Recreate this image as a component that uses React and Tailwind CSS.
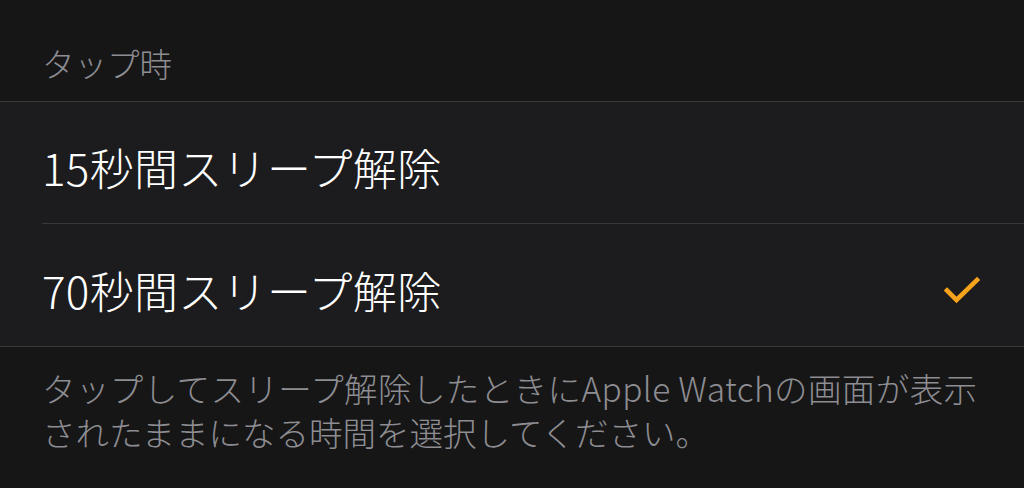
const FONT = "font-['Noto_Sans_CJK_JP','Noto_Sans',sans-serif]";

const options = [
  { id: '15', label: '15秒間スリープ解除', selected: false },
  { id: '70', label: '70秒間スリープ解除', selected: true },
];

const CheckMark = () => (
  <svg width="36" height="30" viewBox="0 0 36 30" fill="none">
    <path
      d="M3 15.5 L12.5 25 L33 5"
      stroke="#f7a21b"
      strokeWidth="4.6"
      strokeLinecap="square"
      strokeLinejoin="miter"
    />
  </svg>
);

const App = () => {
  return (
    <div className={`w-[1024px] h-[488px] overflow-hidden bg-[#161617] font-light ${FONT}`}>
      <div className="px-[42px] pt-[45px] pb-[20px] text-[32.5px] leading-[36px] text-[#8d8d92]">
        タップ時
      </div>

      <div className="bg-[#1c1c1e] border-t border-b border-[#38383a]">
        {options.map((opt, i) => (
          <div key={opt.id} className="pl-[42px]">
            <div
              className={`h-[122px] pt-[9px] pr-[44px] flex items-center justify-between ${
                i < options.length - 1 ? 'border-b border-[#38383a]' : ''
              }`}
            >
              <span className="text-[44px] leading-none text-white tracking-[0.3px]">{opt.label}</span>
              {opt.selected && <CheckMark />}
            </div>
          </div>
        ))}
      </div>

      <div className="px-[42px] pt-[19px] text-[33.5px] leading-[44px] text-[#8d8d92] whitespace-nowrap">
        <div className="tracking-[0.4px]">タップしてスリープ解除したときにApple Watchの画面が表示</div>
        <div>されたままになる時間を選択してください。</div>
      </div>
    </div>
  );
};

export default App;
